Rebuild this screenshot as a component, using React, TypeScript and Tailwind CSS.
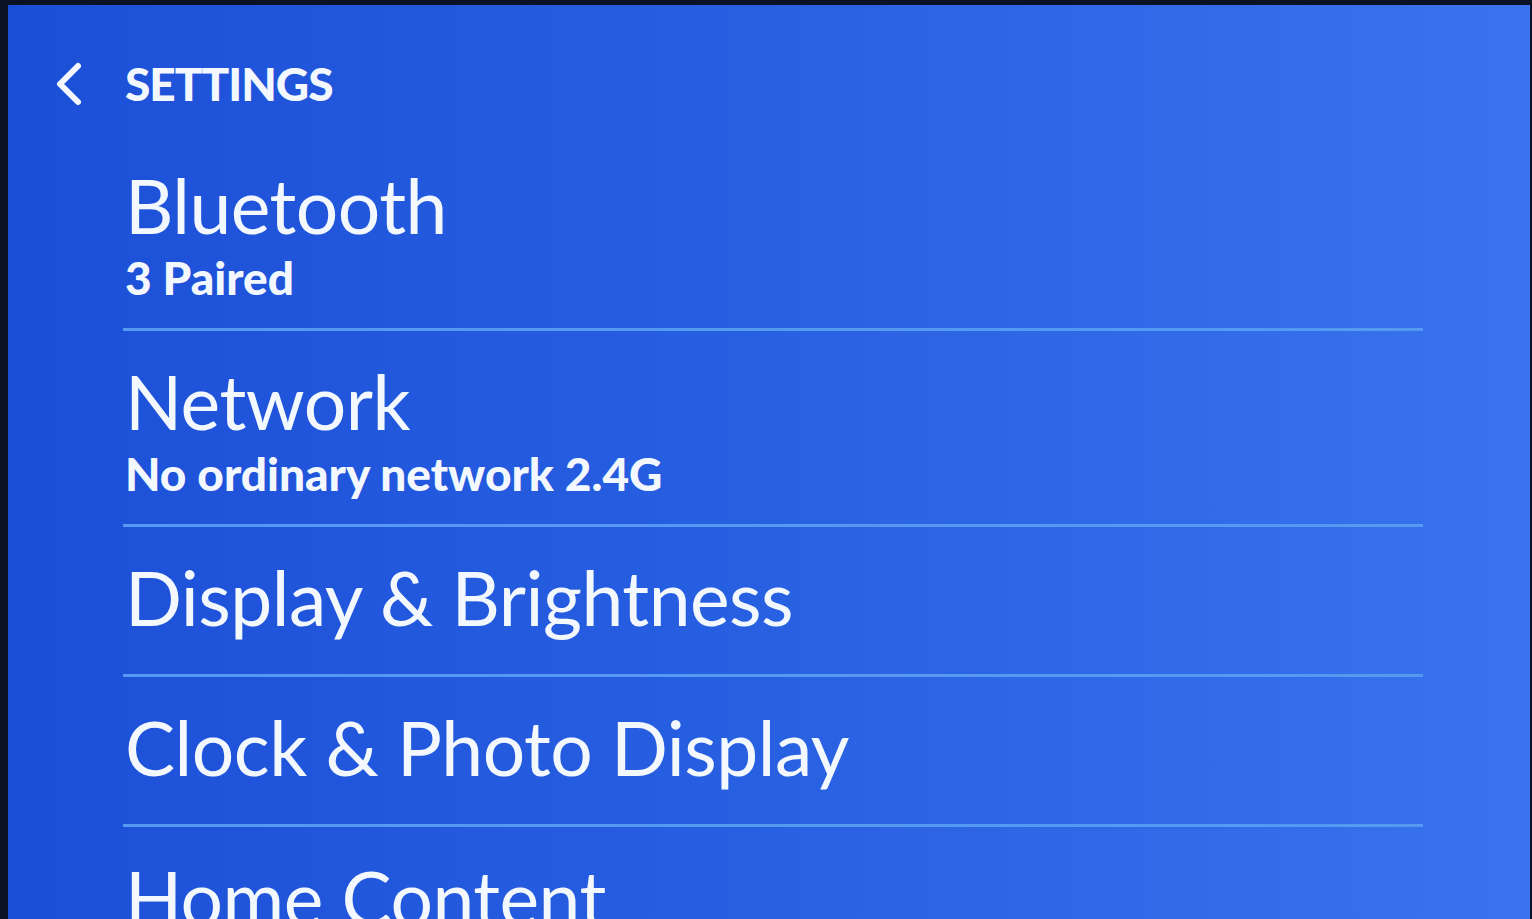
import React from 'react';

const SettingsScreen: React.FC = () => {
  const items = [
    { title: 'Bluetooth', subtitle: '3 Paired' },
    { title: 'Network', subtitle: 'No ordinary network 2.4G' },
    { title: 'Display & Brightness' },
    { title: 'Clock & Photo Display' },
    { title: 'Home Content' }
  ];

  return (
    <div className="h-[919px] w-full overflow-hidden bg-[#0b1226] pl-[8px] pt-[5px] pr-[2px]">
      <div
        className="h-full w-full bg-gradient-to-r from-[#1c4fd7] via-[#2860e2] to-[#3a73ed] text-[#f3f8ff]"
        style={{ fontFamily: 'Lato, "Open Sans", sans-serif' }}
      >
        {/* Header */}
        <div className="flex items-center pt-[56px]">
          <svg
            className="ml-[45px] h-[46px] w-[30px]"
            viewBox="0 0 30 46"
            fill="none"
            stroke="currentColor"
            strokeWidth="6"
            strokeLinecap="round"
            strokeLinejoin="round"
          >
            <path d="M25 5 L7 23 L25 41" />
          </svg>
          <span className="ml-[42px] text-[46px] font-black leading-none tracking-[-1px]">SETTINGS</span>
        </div>

        {/* List */}
        <div className="ml-[115px] mt-[28px] w-[1300px]">
          {items.map((item, index) => (
            <div
              key={index}
              className={`pl-[2px] pt-[33px] ${item.subtitle ? 'pb-[27px]' : 'pb-[39px]'} ${index < items.length - 1 ? 'border-b-[3px] border-[#5699f0]' : ''}`}
            >
              <div className="text-[75px] leading-none tracking-[-0.5px]">{item.title}</div>
              {item.subtitle && (
                <div className="mt-[12px] text-[46px] font-black leading-none">{item.subtitle}</div>
              )}
            </div>
          ))}
        </div>
      </div>
    </div>
  );
};

export default function App() {
  return <SettingsScreen />;
}
